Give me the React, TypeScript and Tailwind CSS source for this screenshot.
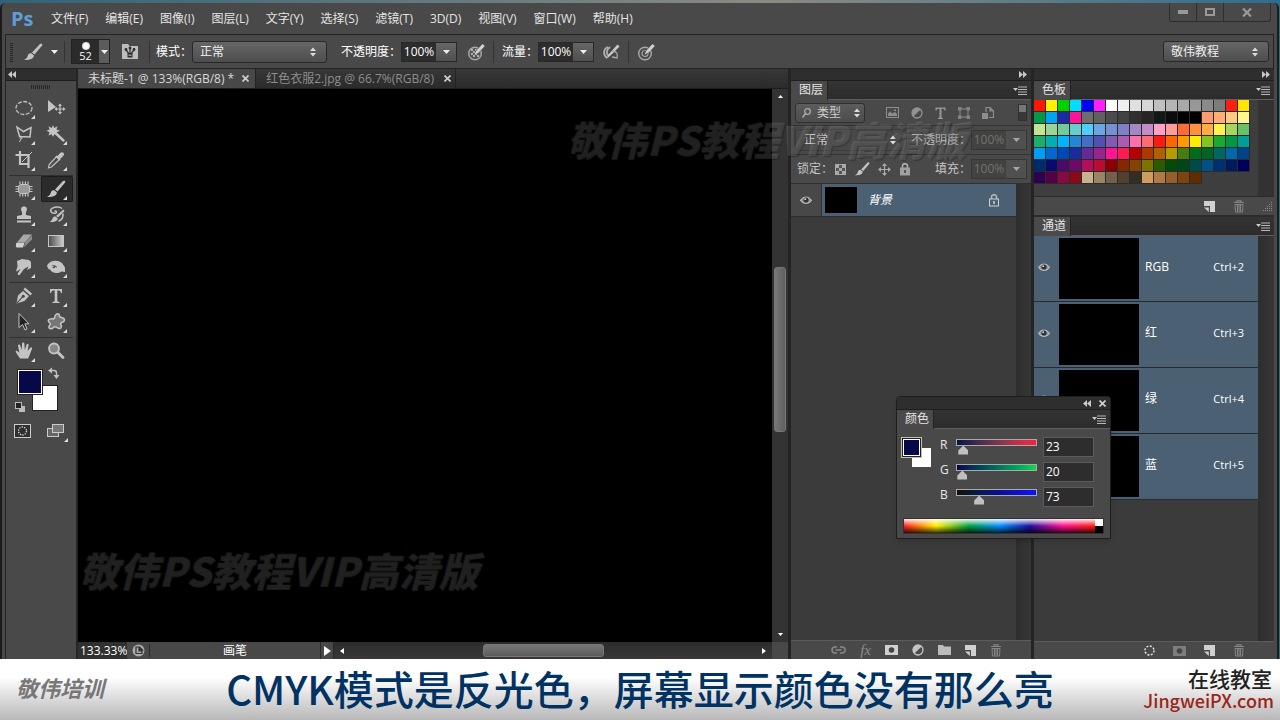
import type { ReactNode } from "react";
import clsx from "clsx";

const menus = ["文件(F)", "编辑(E)", "图像(I)", "图层(L)", "文字(Y)", "选择(S)", "滤镜(T)", "3D(D)", "视图(V)", "窗口(W)", "帮助(H)"];

const swatches = [
  "ff1700 fff200 00d200 00dfff 0000ff ff1eff ffffff efefef e0e0e0 d6d6d6 c0c0c0 b5b5b5 a9a9a9 979797 8a8a8a 7c7c7c ff1e12 ffe600",
  "00994a 00a4f5 1c2ba5 ff1493 6e6e6e 606060 4c4c4c 424242 303030 252525 121816 0a0c0f 000000 000000 ff9a70 ffae76 ffc97e fff68e",
  "c3e592 9ad597 74c99c 66cdcc 4fcfff 6ba5e3 7490d6 7f7fc8 a388c6 c48cc6 ffa0c6 ff9b98 ff6a35 ff913d ffac46 fff24c a7d55d 68c168",
  "1ab06b 00afb3 00b4ff 2386d6 426ec8 5151b3 8259b3 ab5cb0 ff70a8 ff6b70 ff1a10 ff6600 ff9900 ffec00 84c420 1aaa30 009845 009d9a",
  "009ff5 0068d0 0048b8 1c2aa0 652a98 96268e ff1493 ff1a50 b90000 ac3a00 b06000 b39b00 447d10 006c1a 006424 006662 0069ad 004388",
  "002a6e 0a0a6e 4a0a66 6d0a68 b30e5c b80c30 8a0000 852800 844400 7d7300 2c5a00 004a0a 004618 004a48 00508a 00306e 001a5c 00005a",
  "300050 530046 880a42 8a0a18 c9b28e 998466 735f4c 50402f 352d22 cf9d60 b07a44 955e2a 7e4410 5e2e00",
]
  .join(" ")
  .split(" ");

const channels = [
  { name: "RGB", key: "Ctrl+2" },
  { name: "红", key: "Ctrl+3" },
  { name: "绿", key: "Ctrl+4" },
  { name: "蓝", key: "Ctrl+5" },
];

const sliders = [
  { label: "R", value: 23, track: "bg-linear-to-r from-[#00144a] to-[#ff1c38]" },
  { label: "G", value: 20, track: "bg-linear-to-r from-[#0b004a] to-[#14d848]" },
  { label: "B", value: 73, track: "bg-linear-to-r from-[#101005] via-[#0c0c8a] to-[#0a14ff]" },
];

const brush = (
  <>
    <path d="M18.5 1.5 L19.5 3 L11.5 12.5 L9 10.5 L17 2 Z" fill="#c4c4c4" />
    <path d="M8.3 11.2 L10.8 13.2 C11 16 8.5 18 1 18 C4 16.5 4.3 15 5 13 C5.6 11.5 7 11 8.3 11.2 Z" fill="#c4c4c4" />
  </>
);

type Tool = { name: string; art: ReactNode; flyout?: boolean; active?: boolean };

const toolGroups: Tool[][] = [
  [
    { name: "椭圆选框", flyout: true, art: <ellipse cx="10" cy="10" rx="8" ry="6.5" fill="none" stroke="#c4c4c4" strokeWidth="1.3" strokeDasharray="4 1.5" /> },
    {
      name: "移动",
      art: (
        <>
          <path d="M2 2 L2 14 L10 9 Z" fill="#c4c4c4" />
          <path d="M14 6.5 V15.5 M9.5 11 H18.5" stroke="#c4c4c4" strokeWidth="1.2" />
          <path d="M14 5.5 L12 8 H16 Z M14 16.5 L12 14 H16 Z M8.5 11 L11 9 V13 Z M19.5 11 L17 9 V13 Z" fill="#c4c4c4" />
        </>
      ),
    },
    {
      name: "套索",
      flyout: true,
      art: (
        <>
          <path d="M3 3 L9.5 7.5 L17 3.5 L16 13 L5.5 12.5 Z" fill="none" stroke="#c4c4c4" strokeWidth="1.5" />
          <path d="M5.5 12 C8.5 12 9 15 6.5 14.8 C5 14 6.5 12.5 8 14.5 M7 15 L5.5 18" fill="none" stroke="#c4c4c4" />
        </>
      ),
    },
    {
      name: "魔棒",
      flyout: true,
      art: (
        <>
          <path d="M7 1 L8.2 4 L11.5 2.3 L10.5 5.5 L14 6.8 L10.6 8.2 L11.5 11.5 L8.3 10.2 L7 13 L5.7 10.2 L2.5 11.5 L3.5 8.2 L0.5 6.8 L3.5 5.5 L2.5 2.3 L5.8 4 Z" fill="#c4c4c4" />
          <path d="M10 9.5 L17.5 16.5" stroke="#c4c4c4" strokeWidth="2.4" strokeLinecap="round" />
        </>
      ),
    },
    {
      name: "裁剪",
      flyout: true,
      art: (
        <>
          <path d="M6 1 V14 H15 M1.5 5 H14.5 V18" fill="none" stroke="#c4c4c4" strokeWidth="2.2" />
          <path d="M8 12 L18 2" stroke="#c4c4c4" />
        </>
      ),
    },
    {
      name: "吸管",
      flyout: true,
      art: (
        <>
          <path d="M10.5 6.5 L13.5 9.5 L5.5 17 L2.5 17.8 L3.2 14.5 Z" fill="#4a4a4a" stroke="#c4c4c4" strokeWidth="1.2" />
          <path d="M10 6 L14 10 M11.8 6.8 L14.8 3.5 C16.2 2 18.2 4 16.7 5.5 L13.5 8.5 Z" fill="#c4c4c4" stroke="#c4c4c4" strokeWidth="1.6" />
        </>
      ),
    },
  ],
  [
    {
      name: "修补",
      flyout: true,
      art: (
        <>
          <rect x="4.5" y="5.5" width="11" height="9" rx="2.5" fill="#999" stroke="#c4c4c4" strokeWidth="1" />
          <path d="M6 2.5 V5 M8.7 2.5 V5 M11.4 2.5 V5 M14 2.5 V5 M6 15 V17.5 M8.7 15 V17.5 M11.4 15 V17.5 M14 15 V17.5 M1.5 7.5 H4 M1.5 10 H4 M1.5 12.5 H4 M16 7.5 H18.5 M16 10 H18.5 M16 12.5 H18.5" stroke="#c4c4c4" strokeWidth="1.2" />
        </>
      ),
    },
    { name: "画笔", flyout: true, active: true, art: brush },
    {
      name: "仿制图章",
      flyout: true,
      art: <path d="M10 1.5 C12.5 1.5 13.6 3.6 12.6 5.8 C12 7.2 11.7 8.5 12 10 L17 11 V14 H3 V11 L8 10 C8.3 8.5 8 7.2 7.4 5.8 C6.4 3.6 7.5 1.5 10 1.5 Z M3 15.5 H17 V17.5 H3 Z" fill="#c4c4c4" />,
    },
    {
      name: "历史记录画笔",
      flyout: true,
      art: (
        <>
          <path d="M17.5 4.5 L18.5 6 L12 12.5 L10 11 Z M9.5 11.5 L11.8 13.4 C11.5 16 8.5 17 3.5 17 C6 15.8 6.2 14.2 7 12.8 C7.6 11.7 8.5 11.2 9.5 11.5 Z" fill="#c4c4c4" />
          <path d="M8.5 6.5 C10.5 5 11.5 8 9 8.3 C5 8.8 3 5 6.5 3.2 C9.5 1.6 14 1.8 16 3.5 M17 8.5 C17.5 12.5 15.5 15 12.5 16.3" fill="none" stroke="#c4c4c4" strokeWidth="1.5" />
        </>
      ),
    },
    {
      name: "橡皮擦",
      flyout: true,
      art: (
        <>
          <path d="M9.5 3.5 H18 L11 11.5 H3 Z" fill="#a8a8a8" />
          <path d="M2.2 11.8 H10.5 L9 16.5 H3 C2 16.5 1.5 15.5 2 14 Z" fill="#d0d0d0" />
          <path d="M11.2 11.8 L18 4.3 V8.5 L9.7 16.5 Z" fill="#8c8c8c" />
        </>
      ),
    },
    {
      name: "渐变",
      flyout: true,
      art: (
        <>
          <defs>
            <linearGradient id="gradientTool">
              <stop stopColor="#4a4a4a" />
              <stop offset="1" stopColor="#d0d0d0" />
            </linearGradient>
          </defs>
          <rect x="2.5" y="4.5" width="15" height="11" fill="url(#gradientTool)" stroke="#c4c4c4" />
        </>
      ),
    },
    {
      name: "涂抹",
      flyout: true,
      art: <path d="M3 4 L8 2 L15 3 L17 5 V11 L13 13 L14.5 9.5 L10 12 L6 17.5 C4.5 19 3 17.5 4 16 L6.5 12 L2.5 14.5 C1.5 13.5 3.5 11 3.5 9 Z" fill="#c4c4c4" />,
    },
    {
      name: "海绵",
      flyout: true,
      art: <path fillRule="evenodd" d="M1 8.5 C3.5 3.5 11 2 16 6 L19 10.5 V15 L15.5 14.5 C10.5 17.5 5.5 15.5 4.5 13 L2 11.5 Z M5.5 8.5 C8 8 10 8.5 11 10 C9.5 11.5 7 11.5 6 10.5 L8.5 9.8 Z" fill="#c4c4c4" />,
    },
  ],
  [
    {
      name: "钢笔",
      flyout: true,
      art: (
        <>
          <path d="M11 1.5 L18 7.5 L16.5 9.5 L9.5 3.5 Z" fill="#c4c4c4" />
          <path d="M9 5 L15 10 L10.5 15 L2.5 17.5 L4 9.5 Z" fill="#c4c4c4" />
          <path d="M3 17 L8.5 10.8" stroke="#444" strokeWidth="1.1" />
          <circle cx="9.2" cy="10.2" r="1.5" fill="#444" />
        </>
      ),
    },
    { name: "文字", flyout: true, art: <path d="M4 3 H16 V7 H15 C14.5 5 14 4.5 11.3 4.5 V14.5 C11.3 15.5 12 15.8 13.5 16 V17 H6.5 V16 C8 15.8 8.7 15.5 8.7 14.5 V4.5 C6 4.5 5.5 5 5 7 H4 Z" fill="#c4c4c4" /> },
    { name: "路径选择", flyout: true, art: <path d="M5 1.5 V15.5 L8.5 12.5 L11 18 L13 17 L10.8 11.8 H15 Z" fill="#222" stroke="#c4c4c4" strokeWidth="1" /> },
    { name: "自定形状", flyout: true, art: <path d="M10 2.5 C11.5 1 14 2 13.5 4.5 C14 6 18.5 5 18.5 8 C18.5 10.5 14.5 10 14.5 12 C16 14.5 15.5 17 13 16.5 C10.5 16 9.5 13.5 7.5 15.5 C5 18 1.5 16.5 3.5 13.5 C5.5 11.5 3.5 11 2.5 9.5 C1.5 7 5 6.5 7.5 7 C9 6.5 8.5 4 10 2.5 Z" fill="#777" stroke="#c4c4c4" strokeWidth="1.5" /> },
  ],
  [
    {
      name: "抓手",
      flyout: true,
      art: <path d="M6 17.5 L2 11.5 C1 9.5 2.8 9 4 10.5 L5.5 12 L4 5 C3.7 3.2 5.7 2.8 6.3 4.5 L7.8 9 L8 2.8 C8 1 10.3 1 10.4 2.8 L10.8 9 L12.5 3.8 C13.2 2 15 2.8 14.6 4.6 L13.6 10 L16.3 6.8 C17.5 5.5 18.8 6.8 17.8 8.5 L14.2 17.5 Z" fill="#c4c4c4" />,
    },
    {
      name: "缩放",
      art: (
        <>
          <circle cx="8" cy="7.5" r="5" fill="#888" stroke="#c4c4c4" strokeWidth="1.8" />
          <path d="M12 11.5 L17 16.5" stroke="#c4c4c4" strokeWidth="2.8" strokeLinecap="round" />
        </>
      ),
    },
  ],
];

const Caret = ({ dim }: { dim?: boolean }) => (
  <svg width="7" height="4" viewBox="0 0 7 4" aria-hidden="true">
    <path d="M0 0 H7 L3.5 4 Z" fill={dim ? "#a8a8a8" : "#eee"} />
  </svg>
);

const UpDown = () => (
  <svg width="6" height="10" viewBox="0 0 6 10" aria-hidden="true" className="pointer-events-none -ml-3 shrink-0">
    <path d="M0 4 L3 0.5 L6 4 Z M0 6 L3 9.5 L6 6 Z" fill="#ddd" />
  </svg>
);

const Chevrons = ({ flip }: { flip?: boolean }) => (
  <svg width="8" height="7" viewBox="0 0 8 7" aria-hidden="true" className={clsx(flip && "rotate-180")}>
    <path d="M0 0 L4 3.5 L0 7 Z M4 0 L8 3.5 L4 7 Z" fill="#c8c8c8" />
  </svg>
);

const Cross = () => (
  <svg width="7" height="7" viewBox="0 0 7 7" aria-hidden="true">
    <path d="M0.5 0.5 L6.5 6.5 M6.5 0.5 L0.5 6.5" stroke="#d0d0d0" strokeWidth="1.6" />
  </svg>
);

const Eye = () => (
  <svg width="12" height="10" viewBox="0 0 12 10" aria-hidden="true">
    <path d="M0.5 5.5 C2.5 1 9.5 1 11.5 5.5 C9.5 9.3 2.5 9.3 0.5 5.5 Z" fill="#9a9da0" stroke="#c8c8c8" />
    <circle cx="6" cy="5" r="2.6" fill="#2e3338" />
    <circle cx="5.2" cy="4.2" r="0.9" fill="#ddd" />
  </svg>
);

const Divider = ({ className }: { className?: string }) => (
  <span className={clsx("h-[22px] w-px shrink-0 bg-[#333]", className)} />
);

const Grip = ({ className }: { className?: string }) => (
  <span className={clsx("bg-[repeating-linear-gradient(90deg,#262626_0_1px,#4a4a4a_1px_2px)]", className)} />
);

const Glyph = ({ w = 18, h = 18, box, children }: { w?: number; h?: number; box?: string; children: ReactNode }) => (
  <svg width={w} height={h} viewBox={box ?? `0 0 ${w} ${h}`} aria-hidden="true" className="shrink-0">
    {children}
  </svg>
);

const Lock = ({ outline }: { outline?: boolean }) => (
  <Glyph w={12} h={14}>
    <path d="M3.5 6 V4 C3.5 1 8.5 1 8.5 4 V6" fill="none" stroke="#b8b8b8" strokeWidth="1.4" />
    <rect x="1.5" y="6" width="9" height="7" fill={outline ? "none" : "#a0a0a0"} stroke={outline ? "#d0d0d0" : "#a0a0a0"} />
    <path d="M6 8 V11" stroke={outline ? "#ccc" : "#444"} strokeWidth="1.6" />
  </Glyph>
);

const NewIcon = () => (
  <Glyph w={11} h={11}>
    <path d="M0 0 H11 V11 H6 V5 H0 Z" fill="#d0d0d0" />
    <path d="M0 6.5 H4.8 V11 Z" fill="#d0d0d0" />
  </Glyph>
);

const Trash = () => (
  <Glyph w={12} h={13}>
    <path d="M1 2.5 H11 M4 2 V0.8 H8 V2" fill="none" stroke="#858585" strokeWidth="1.2" />
    <path d="M2 4.5 H10 L9.5 12 H2.5 Z M4.5 5 V11.5 M6 5 V11.5 M7.5 5 V11.5" fill="none" stroke="#858585" />
  </Glyph>
);

const MaskIcon = ({ dim }: { dim?: boolean }) => (
  <Glyph w={13} h={10}>
    <rect width="13" height="10" fill={dim ? "#7d7d7d" : "#d0d0d0"} />
    <circle cx="6.5" cy="5" r="2.8" fill="#444" />
  </Glyph>
);

const AdjustIcon = () => (
  <Glyph w={12} h={12}>
    <circle cx="6" cy="6" r="5" fill="#4a4a4a" stroke="#c4c4c4" strokeWidth="1.3" />
    <path d="M2.4 9.6 A5 5 0 0 1 9.6 2.4 Z" fill="#c4c4c4" />
  </Glyph>
);

const TargetRings = () => (
  <>
    <circle cx="8" cy="10.5" r="6.3" fill="none" stroke="#a8a8a8" strokeWidth="1.4" />
    <circle cx="8" cy="10.5" r="3" fill="none" stroke="#a8a8a8" strokeWidth="1.2" />
    <path d="M8 11 L16.5 2" stroke="#4a4a4a" strokeWidth="4" />
    <path d="M7.5 11.5 L9.5 7.5 L15.5 1 L17.8 3 L11.5 9.8 Z" fill="#d0d0d0" />
  </>
);

const Checker = () => (
  <>
    <circle cx="8" cy="10.5" r="6.3" fill="#555" stroke="#a8a8a8" strokeWidth="1.4" />
    <path d="M4 6 H6 V8 H4 Z M8 6 H10 V8 H8 Z M6 8 H8 V10 H6 Z M10 8 H12 V10 H10 Z M4 10 H6 V12 H4 Z M8 10 H10 V12 H8 Z M6 12 H8 V14 H6 Z M10 12 H12 V14 H10 Z" fill="#b0b0b0" />
    <path d="M10 9 L16.5 2" stroke="#4a4a4a" strokeWidth="4" />
    <path d="M7.5 11.5 L9.5 7.5 L15.5 1 L17.8 3 L11.5 9.8 Z" fill="#d0d0d0" />
  </>
);

function Picker({ label, value, className }: { label: string; value: string; className?: string }) {
  return (
    <div className={clsx("flex items-center rounded-[3px] border border-[#282828] bg-linear-to-b from-[#666] to-[#4e4e4e] pr-1", className)}>
      <select aria-label={label} className="h-full w-full appearance-none bg-transparent px-[7px] text-[12px] text-[#f0f0f0] outline-none">
        <option>{value}</option>
      </select>
      <UpDown />
    </div>
  );
}

function Percent({ id, label, dim }: { id: string; label: string; dim?: boolean }) {
  return (
    <div className="flex items-center">
      <label htmlFor={id} className={dim ? "text-[#c4c4c4]" : ""}>
        {label}
      </label>
      <div className={clsx("flex h-[20px] border", dim ? "border-[#363636]" : "border-[#282828]")}>
        <input
          id={id}
          defaultValue="100%"
          className={clsx("w-[34px] text-center text-[12px] outline-none", dim ? "bg-[#424242] text-[#74746c]" : "bg-[#2d2d2d] text-white")}
        />
        <button
          aria-label={`${label}滑块`}
          className={clsx("flex w-[20px] items-center justify-center", dim ? "bg-[#505050]" : "bg-linear-to-b from-[#666] to-[#505050]")}
        >
          <Caret dim={dim} />
        </button>
      </div>
    </div>
  );
}

function PanelTabs({ title }: { title: string }) {
  return (
    <div className="flex h-[19px] shrink-0 items-center justify-between border-b border-[#5e5e5e] bg-linear-to-b from-[#343434] to-[#2c2c2c] pr-1">
      <button className="h-[19px] border-r border-[#222] bg-[#4a4a4a] pr-1 pl-2 leading-[18px] text-[#e4e4e4]">{title}</button>
      <button aria-label={`${title}面板菜单`}>
        <Glyph w={14} h={9}>
          <path d="M0 2 H5 L2.5 5 Z" fill="#ccc" />
          <path d="M5 1 H14 M5 3.5 H14 M5 6 H14 M5 8.5 H14" stroke="#b8b8b8" />
        </Glyph>
      </button>
    </div>
  );
}

function DockHeader({ left }: { left?: boolean }) {
  return (
    <div className={clsx("flex h-[12px] shrink-0 items-center border-b border-[#1e1e1e] bg-[#2e2e2e]", left ? "px-0.5" : "justify-end px-1")}>
      <button aria-label="折叠面板" className="flex">
        <Chevrons flip={left} />
      </button>
    </div>
  );
}

function TitleBar() {
  return (
    <header className="flex h-[31px] shrink-0 items-start justify-between pr-[3px]">
      <div className="flex h-full items-center">
        <span className="w-[39px] pl-1.5 text-[20px] leading-none font-bold text-[#5f9dd6]">Ps</span>
        <nav className="flex gap-4">
          {menus.map((menu, i) => (
            <button key={menu} className={clsx("text-[#e4e4e4]", i === 0 ? "pl-[7px]" : "pl-px")}>
              {menu}
            </button>
          ))}
        </nav>
      </div>
      <div className="flex h-[19px] rounded-b-[3px] border border-t-0 border-[#2e2e2e]">
        <button aria-label="最小化" className="flex w-[27px] items-center justify-center border-r border-[#2e2e2e]">
          <Glyph w={10} h={4}>
            <rect width="10" height="4" fill="#999" />
          </Glyph>
        </button>
        <button aria-label="最大化" className="flex w-[27px] items-center justify-center border-r border-[#2e2e2e]">
          <Glyph w={10} h={8}>
            <rect x="1" y="1" width="8" height="6" fill="none" stroke="#999" strokeWidth="2" />
          </Glyph>
        </button>
        <button aria-label="关闭" className="flex w-[46px] items-center justify-center">
          <Glyph w={10} h={9}>
            <path d="M1 0.5 L9 8.5 M9 0.5 L1 8.5" stroke="#999" strokeWidth="2.2" />
          </Glyph>
        </button>
      </div>
    </header>
  );
}

function OptionsBar() {
  return (
    <div className="flex h-[35px] shrink-0 items-center border border-[#242424] pr-1 pl-1 text-white">
      <span className="h-[20px] w-[3px] bg-[repeating-linear-gradient(0deg,#262626_0_1px,#4a4a4a_1px_2px)]" />
      <button aria-label="画笔预设" className="ml-2.5 flex items-center gap-2">
        <Glyph w={20} h={20}>
          {brush}
        </Glyph>
        <Caret />
      </button>
      <Divider className="ml-1.5" />
      <button aria-label="画笔大小 52" className="ml-1.5 flex h-[25px] border border-[#222]">
        <span className="flex h-full w-[27px] flex-col items-center bg-[#2b2b2b] text-[11px] leading-[12px]">
          <span className="mt-0.5 size-[8px] shrink-0 rounded-full bg-[radial-gradient(#fff_40%,#999)]" />
          52
        </span>
        <span className="flex h-full w-[10px] items-center justify-center bg-[#5c5c5c]">
          <Caret />
        </span>
      </button>
      <button aria-label="切换画笔面板" className="ml-3">
        <Glyph w={17} h={17}>
          <path d="M0 1 H6 L7.5 3 H16 V16 H0 Z" fill="#bdbdbd" />
          <path d="M5.5 10 H10.5 V14.5 H5.5 Z" fill="#2c2c2c" />
          <path d="M6.5 11.5 H9.5 V13 H6.5 Z" fill="#999" />
          <path d="M8 10 V6 M6.5 10 L4 7 M9.5 10 L12 7" fill="none" stroke="#2c2c2c" strokeWidth="1.2" />
          <circle cx="4" cy="6.5" r="1.4" fill="#2c2c2c" />
          <circle cx="12" cy="6.5" r="1.4" fill="#2c2c2c" />
          <circle cx="8" cy="5" r="1.4" fill="#2c2c2c" />
        </Glyph>
      </button>
      <Divider className="ml-2.5" />
      <span className="ml-1.5">模式：</span>
      <Picker label="模式" value="正常" className="h-[22px] w-[135px]" />
      <div className="ml-3.5">
        <Percent id="brush-opacity" label="不透明度：" />
      </div>
      <button aria-label="不透明度压力" className="ml-2.5">
        <Glyph>
          <Checker />
        </Glyph>
      </button>
      <Divider className="ml-2" />
      <div className="ml-2">
        <Percent id="brush-flow" label="流量：" />
      </div>
      <button aria-label="喷枪" className="ml-2">
        <Glyph>
          <path d="M6 4 C1 6 1 12 5 15 M8 4 C4 7 4 11 7 13" fill="none" stroke="#b0b0b0" strokeWidth="1.8" />
          <path d="M15.5 1.5 L17.5 3.5 L8 13 L4 16 L7 11 Z" fill="#ccc" />
          <path d="M10 8 C15 8 16 11 15 15 L10 14" fill="none" stroke="#aaa" strokeWidth="1.3" />
        </Glyph>
      </button>
      <Divider className="ml-2" />
      <button aria-label="大小压力" className="ml-2">
        <Glyph>
          <TargetRings />
        </Glyph>
      </button>
      <Picker label="工作区" value="敬伟教程" className="ml-auto h-[21px] w-[106px]" />
    </div>
  );
}

function Toolbox() {
  return (
    <aside className="flex w-[73px] shrink-0 flex-col border-r-2 border-l border-[#252525]">
      <DockHeader left />
      <Grip className="mx-auto mt-1 mb-1.5 h-[4px] w-[20px] shrink-0" />
      {toolGroups.map((group, i) => (
        <div key={i} className={clsx("mx-[3px] grid grid-cols-2", i > 0 && "mt-0.5 border-t border-[#303030]")}>
          {group.map((tool) => (
            <button
              key={tool.name}
              aria-label={tool.name}
              className={clsx("flex h-[26px] rounded-[2px]", tool.active && "bg-[#2b2b2b] inset-ring inset-ring-[#1c1c1c]")}
            >
              <svg width="31" height="26" viewBox="0 0 31 26" aria-hidden="true">
                <g transform="translate(5 3)">{tool.art}</g>
                {tool.flyout && <path d="M26 20 V24 H22 Z" fill="#ddd" />}
              </svg>
            </button>
          ))}
        </div>
      ))}
      <div className="relative mt-[3px] ml-2 h-[46px] w-[46px] shrink-0">
        <button aria-label="背景色" className="absolute top-[18px] left-[18px] size-[26px] border border-[#222] bg-white" />
        <button aria-label="前景色" className="absolute top-[2px] left-[3px] size-[26px] border border-[#222] bg-[#080848] inset-ring inset-ring-white" />
        <svg className="absolute top-0 left-[34px]" width="12" height="12" viewBox="0 0 12 12" aria-hidden="true">
          <path d="M3 3.5 H6 C8 3.5 8.5 4.5 8.5 6 V9" fill="none" stroke="#c0c0c0" strokeWidth="1.4" />
          <path d="M0 3.5 L4 0.5 V6.5 Z M8.5 12 L5.5 8 H11.5 Z" fill="#c0c0c0" />
        </svg>
        <svg className="absolute top-[35px] left-[1px]" width="11" height="10" viewBox="0 0 11 10" aria-hidden="true">
          <path d="M4 4 H10 V10 H4 Z" fill="#bbb" />
          <rect x="0.5" y="0.5" width="6" height="6" fill="#222" stroke="#bbb" />
        </svg>
      </div>
      <div className="mx-[3px] mt-[5px] grid grid-cols-2">
        <button aria-label="快速蒙版" className="flex h-[26px] items-center pl-[5px]">
          <Glyph w={17} h={14}>
            <rect x="0.5" y="0.5" width="16" height="13" fill="#303030" stroke="#ccc" />
            <circle cx="8.5" cy="7" r="4" fill="none" stroke="#ddd" strokeWidth="1.3" strokeDasharray="1.3 1.2" />
          </Glyph>
        </button>
        <button aria-label="屏幕模式" className="flex h-[26px]">
          <svg width="31" height="26" viewBox="0 0 31 26" aria-hidden="true">
            <rect x="6.5" y="10.5" width="11" height="8" fill="#666" stroke="#ccc" />
            <rect x="11.5" y="6.5" width="11" height="8" fill="#777" stroke="#ccc" />
            <path d="M27 20 V24 H23 Z" fill="#ddd" />
          </svg>
        </button>
      </div>
    </aside>
  );
}

function DocumentArea() {
  return (
    <main className="flex min-w-0 flex-1 flex-col bg-[#303030]">
      <div className="flex h-[20px] shrink-0 border-b border-[#1d1d1d] bg-linear-to-b from-[#373737] to-[#2b2b2b]">
        <div className="flex items-center gap-2 bg-[#484848] pr-1.5 pl-2.5 text-[#d8d8d8]">
          <button>未标题-1 @ 133%(RGB/8) *</button>
          <button aria-label="关闭 未标题-1">
            <Cross />
          </button>
        </div>
        <div className="flex items-center gap-2.5 border-x border-[#222] pr-1 pl-2.5 text-[#8d8d8d]">
          <button>红色衣服2.jpg @ 66.7%(RGB/8)</button>
          <button aria-label="关闭 红色衣服2.jpg">
            <Cross />
          </button>
        </div>
      </div>
      <div className="flex min-h-0 flex-1">
        <div className="flex-1 bg-black" />
        <div className="flex w-[16px] flex-col items-center justify-between bg-[#333] py-1.5">
          <Glyph w={5} h={3}>
            <path d="M0 3 L2.5 0 L5 3 Z" fill="#fff" />
          </Glyph>
          <div className="mb-[32px] h-[165px] w-[12px] rounded-[3px] border border-[#777] bg-linear-to-r from-[#777] to-[#606060]" />
          <Glyph w={5} h={3}>
            <path d="M0 0 H5 L2.5 3 Z" fill="#fff" />
          </Glyph>
        </div>
      </div>
      <div className="flex h-[17px] shrink-0 items-center bg-[#484848] text-white">
        <input aria-label="缩放" defaultValue="133.33%" className="w-[49px] bg-[#303030] pl-0.5 text-[12px] leading-[17px] outline-none" />
        <span className="flex w-[23px] justify-center border-r border-[#2a2a2a]">
          <Glyph w={13} h={13}>
            <circle cx="6.5" cy="6.5" r="6" fill="#aaa" />
            <path d="M4 3 H7 V7 H10 V9.5 H4 Z M8 3.5 L10.5 6 H8 Z" fill="none" stroke="#333" strokeWidth="1.2" />
          </Glyph>
        </span>
        <span className="w-[170px] text-center leading-[17px]">画笔</span>
        <button aria-label="状态菜单" className="flex h-full w-[14px] items-center justify-center border-x border-[#2a2a2a]">
          <Glyph w={7} h={10}>
            <path d="M0 0 L7 5 L0 10 Z" fill="#fff" />
          </Glyph>
        </button>
        <div className="flex h-full flex-1 items-center justify-between bg-linear-to-b from-[#2c2c2c] to-[#383838] px-1.5">
          <Glyph w={4} h={6}>
            <path d="M4 0 V6 L0 3 Z" fill="#fff" />
          </Glyph>
          <div className="ml-[-20px] h-[13px] w-[121px] rounded-[3px] border border-[#777] bg-linear-to-b from-[#777] to-[#5c5c5c]" />
          <Glyph w={4} h={6}>
            <path d="M0 0 V6 L4 3 Z" fill="#fff" />
          </Glyph>
        </div>
        <span className="w-[16px] self-stretch" />
      </div>
    </main>
  );
}

function LayersPanel() {
  return (
    <aside className="flex w-[243px] shrink-0 flex-col border-l-3 border-[#242424]">
      <DockHeader />
      <PanelTabs title="图层" />
      <div className="flex h-[26px] shrink-0 items-center border-b border-[#333] px-1">
        <div className="flex h-[20px] w-[70px] items-center rounded-[3px] border border-[#303030] bg-linear-to-b from-[#5c5c5c] to-[#4c4c4c] pr-1 pl-1.5">
          <Glyph w={9} h={10}>
            <circle cx="5.5" cy="3.5" r="2.8" fill="none" stroke="#aaa" strokeWidth="1.3" />
            <path d="M3.5 5.5 L0.5 9.5" stroke="#aaa" strokeWidth="1.5" />
          </Glyph>
          <select aria-label="图层过滤" className="w-full appearance-none bg-transparent pl-1.5 text-[12px] text-[#ccc] outline-none">
            <option>类型</option>
          </select>
          <UpDown />
        </div>
        <div className="ml-[21px] flex flex-1 items-center gap-3 opacity-60">
          <Glyph w={13} h={11}>
            <rect x="0.5" y="0.5" width="12" height="10" fill="none" stroke="#bbb" />
            <path d="M2 9 V6.5 L4 4.5 L6 6.5 L9 5 L11 7 V9 Z M8 2.5 H10 V4 H8 Z" fill="#bbb" />
          </Glyph>
          <AdjustIcon />
          <Glyph w={11} h={12}>
            <path d="M0.5 0.5 H10.5 V3.5 H9.5 C9 2 8.5 1.8 6.5 1.8 V10.5 L8 11 V12 H3 V11 L4.5 10.5 V1.8 C2.5 1.8 2 2 1.5 3.5 H0.5 Z" fill="#ccc" />
          </Glyph>
          <Glyph w={12} h={12}>
            <path d="M2 2 H10 V10 H2 Z" fill="none" stroke="#bbb" />
            <path d="M0 0 H3.5 V3.5 H0 Z M8.5 0 H12 V3.5 H8.5 Z M0 8.5 H3.5 V12 H0 Z M8.5 8.5 H12 V12 H8.5 Z" fill="#aaa" />
          </Glyph>
          <Glyph w={12} h={12}>
            <path d="M4 5 V0.5 H8 L11.5 4 V10.5 H7 M8 0.5 V4 H11.5" fill="none" stroke="#bbb" strokeWidth="1.2" />
            <path d="M0 6 H6 V12 H0 Z" fill="#bbb" />
          </Glyph>
        </div>
        <button aria-label="过滤开关" className="h-[17px] w-[9px] border border-[#303030] bg-linear-to-b from-[#777] from-45% to-[#383838] to-50%" />
      </div>
      <div className="flex h-[29px] shrink-0 items-center justify-between border-b border-[#333] px-1">
        <div className="flex h-[22px] w-[112px] items-center rounded-[3px] border border-[#3c3c3c] pr-1">
          <select aria-label="混合模式" className="w-full appearance-none bg-transparent px-2 text-[12px] text-[#ccc] outline-none">
            <option>正常</option>
          </select>
          <UpDown />
        </div>
        <Percent id="layer-opacity" label="不透明度：" dim />
      </div>
      <div className="flex h-[28px] shrink-0 items-center justify-between px-1 text-[#c4c4c4]">
        <div className="flex items-center gap-2 pl-0.5">
          <span className="w-[30px] whitespace-nowrap">锁定：</span>
          <Glyph w={11} h={11}>
            <rect x="0.5" y="0.5" width="10" height="10" fill="#555" stroke="#aaa" />
            <path d="M1 1 H4 V4 H1 Z M7 1 H10 V4 H7 Z M4 4 H7 V7 H4 Z M1 7 H4 V10 H1 Z M7 7 H10 V10 H7 Z" fill="#aaa" />
          </Glyph>
          <Glyph w={16} h={16} box="0 0 20 20">
            {brush}
          </Glyph>
          <Glyph w={13} h={13}>
            <path d="M6.5 2 V11 M2 6.5 H11" stroke="#aaa" strokeWidth="1.2" />
            <path d="M6.5 0 L4 3 H9 Z M6.5 13 L4 10 H9 Z M0 6.5 L3 4 V9 Z M13 6.5 L10 4 V9 Z" fill="#aaa" />
          </Glyph>
          <Lock />
        </div>
        <Percent id="layer-fill" label="填充：" dim />
      </div>
      <div className="flex min-h-0 flex-1 border-t border-[#303030] bg-[#3b3b3b]">
        <ul className="flex-1">
          <li className="flex h-[33px] border-b border-[#2e2e2e] bg-[#4c6073]">
            <button aria-label="显示背景" className="flex w-[31px] items-center justify-center border-r border-[#333] bg-[#484848]">
              <Eye />
            </button>
            <span className="m-[3px] h-[26px] w-[32px] bg-black" />
            <span className="flex-1 pl-2 leading-[31px] text-white italic">背景</span>
            <span className="flex items-center pr-4">
              <Lock outline />
            </span>
          </li>
        </ul>
        <div className="w-[15px] bg-linear-to-r from-[#2e2e2e] to-[#363636]" />
      </div>
      <footer className="flex h-[19px] shrink-0 items-center justify-end gap-3.5 border-t border-[#5c5c5c] pr-[29px]">
        <Glyph w={15} h={8}>
          <path d="M6 1 H4 C0 1 0 7 4 7 H6 M9 1 H11 C15 1 15 7 11 7 H9 M4.5 4 H10.5" fill="none" stroke="#888" strokeWidth="1.5" />
        </Glyph>
        <span className="font-['Liberation_Serif',serif] text-[15px] leading-none text-[#8c8c8c] italic">fx</span>
        <MaskIcon />
        <AdjustIcon />
        <Glyph w={13} h={10}>
          <path d="M0 0 H5 L6 1.5 H13 V10 H0 Z" fill="#bbb" />
        </Glyph>
        <NewIcon />
        <Trash />
      </footer>
    </aside>
  );
}

function RightDock() {
  return (
    <aside className="flex w-[243px] shrink-0 flex-col border-l-3 border-[#242424]">
      <DockHeader />
      <PanelTabs title="色板" />
      <div className="flex h-[96px] shrink-0 justify-between bg-[#3e3e3e]">
        <div className="grid w-[216px] auto-rows-[12px] grid-cols-[repeat(18,12px)]">
          {swatches.map((color, i) => (
            <button key={i} aria-label={`#${color}`} className="border-r border-b border-[#2b2b2b]" style={{ backgroundColor: `#${color}` }} />
          ))}
        </div>
        <div className="w-[16px] bg-[#323232]" />
      </div>
      <div className="flex h-[21px] shrink-0 items-center justify-end gap-[18px] border-t border-b-2 border-[#2b2b2b] pr-[2px]">
        <NewIcon />
        <Trash />
        <Glyph w={9} h={9}>
          <path d="M8.5 0 V9 M6.5 2 V9 M4.5 4 V9 M2.5 6 V9 M0.5 8 V9" stroke="#888" strokeDasharray="1 1" />
        </Glyph>
      </div>
      <PanelTabs title="通道" />
      <div className="flex min-h-0 flex-1 bg-[#3b3b3b]">
        <ul className="flex-1">
          {channels.map((channel) => (
            <li key={channel.name} className="flex h-[66px] items-center border-b border-[#242c33] bg-[#4c6073] text-white">
              <button aria-label={`显示${channel.name}`} className="flex w-[24px] pb-1 pl-1">
                <Eye />
              </button>
              <span className="ml-px h-[61px] w-[80px] bg-black" />
              <span className="flex-1 pb-1 pl-1.5">{channel.name}</span>
              <span className="pr-3.5 pb-1 text-[11px]">{channel.key}</span>
            </li>
          ))}
        </ul>
        <div className="w-[16px] bg-linear-to-r from-[#2e2e2e] to-[#363636]" />
      </div>
      <footer className="flex h-[18px] shrink-0 items-center justify-end gap-[18px] border-t border-[#5c5c5c] pr-[29px]">
        <Glyph w={11} h={11}>
          <circle cx="5.5" cy="5.5" r="4.5" fill="none" stroke="#e0e0e0" strokeWidth="1.5" strokeDasharray="2 1.5" />
        </Glyph>
        <MaskIcon dim />
        <NewIcon />
        <Trash />
      </footer>
    </aside>
  );
}

function ColorPanel() {
  return (
    <section className="absolute top-[396px] right-[169px] w-[215px] rounded-t-[4px] border border-[#1e1e1e] bg-[#494949] shadow-md">
      <div className="flex h-[13px] items-center justify-end gap-2 rounded-t-[4px] border-b border-[#1e1e1e] bg-[#2e2e2e] pr-1">
        <Chevrons flip />
        <button aria-label="关闭颜色面板">
          <Cross />
        </button>
      </div>
      <PanelTabs title="颜色" />
      <div className="flex pt-2 pr-4 pl-1">
        <div className="relative h-[32px] w-[32px] shrink-0">
          <button aria-label="背景色" className="absolute top-[11px] left-[11px] size-[19px] bg-white" />
          <button aria-label="前景色" className="absolute top-0 left-0 size-[21px] border border-[#c0c0c0] bg-[#222] p-px">
            <span className="block size-full border border-white bg-[#080848]" />
          </button>
        </div>
        <div className="ml-[7px] flex flex-1 flex-col gap-1.5">
          {sliders.map((slider) => (
            <div key={slider.label} className="flex h-[19px] items-center">
              <label htmlFor={`channel-${slider.label}`} className="w-[16px] pb-1 text-[#e8e8e8]">
                {slider.label}
              </label>
              <div className="flex w-[81px] flex-col">
                <span className={clsx("h-[7px] border border-[#aaa]", slider.track)} />
                <input
                  id={`channel-${slider.label}`}
                  type="range"
                  max="255"
                  defaultValue={slider.value}
                  className="-mx-[5px] h-[9px] appearance-none bg-transparent [&::-webkit-slider-thumb]:h-[9px] [&::-webkit-slider-thumb]:w-[10px] [&::-webkit-slider-thumb]:appearance-none [&::-webkit-slider-thumb]:bg-[#c0c0c0] [&::-webkit-slider-thumb]:[clip-path:polygon(50%_0,100%_55%,100%_100%,0_100%,0_55%)]"
                />
              </div>
              <input
                aria-label={`${slider.label} 值`}
                defaultValue={slider.value}
                className="ml-1.5 h-[20px] w-[51px] border border-[#5c5c5c] bg-[#2d2d2d] pl-0.5 text-[12px] text-white outline-none"
              />
            </div>
          ))}
        </div>
      </div>
      <div className="mx-1.5 mt-3 mb-1 flex h-[16px] border border-[#333]">
        <div className="flex-1 bg-[linear-gradient(rgba(255,255,255,0.9),transparent_50%,rgba(0,0,0,0.8)),linear-gradient(90deg,#ff2020,#fff000_17%,#00a040_34%,#0090ff_50%,#2010a0_66%,#ff1090_83%,#ff2010)]" />
        <div className="w-[8px] bg-linear-to-b from-white from-50% to-black to-50%" />
      </div>
    </section>
  );
}

const Watermark = ({ className }: { className: string }) => (
  <span
    className={clsx(
      "pointer-events-none absolute font-['Noto_Sans_CJK_SC',sans-serif] text-[40px] leading-none font-black whitespace-nowrap text-white/10 italic text-shadow-[-1px_-1px_0_rgba(255,255,255,0.05),1px_1px_1px_rgba(0,0,0,0.25)]",
      className,
    )}
  >
    敬伟PS教程VIP高清版
  </span>
);

export default function App() {
  return (
    <div className="relative flex h-screen flex-col overflow-hidden bg-linear-to-r from-[#2e6379] via-[#8a8a82] via-60% to-[#2b6d8c] pt-[3px] font-['Open_Sans','Noto_Sans_CJK_SC',sans-serif] text-[12px] leading-4">
      <div className="mr-px flex min-h-0 flex-1 flex-col rounded-t-[5px] border-x-2 border-[#1c1c1c] bg-[#494949] px-[3px]">
        <TitleBar />
        <OptionsBar />
        <div className="flex min-h-0 flex-1">
          <Toolbox />
          <DocumentArea />
          <LayersPanel />
          <RightDock />
        </div>
      </div>
      <ColorPanel />
      <Watermark className="top-[119px] left-[567px]" />
      <Watermark className="bottom-[130px] left-[79px]" />
      <footer className="grid h-[61px] shrink-0 grid-cols-[1fr_auto_1fr] items-center bg-linear-to-b from-white from-30% to-[#b8b8b8] font-['Noto_Sans_CJK_SC',sans-serif]">
        <span className="pb-1.5 pl-4 text-[22px] font-bold text-[#777] italic">敬伟培训</span>
        <p className="pb-1 text-[40px] leading-[56px] font-medium whitespace-nowrap text-[#003263]">CMYK模式是反光色，屏幕显示颜色没有那么亮</p>
        <div className="flex flex-col items-end pr-1.5 pb-0.5 leading-[22px]">
          <span className="pr-0.5 text-[21px] font-medium text-[#222]">在线教室</span>
          <a href="#jingweipx" className="text-[18px] font-medium text-[#9c2418]">
            JingweiPX.com
          </a>
        </div>
      </footer>
    </div>
  );
}
